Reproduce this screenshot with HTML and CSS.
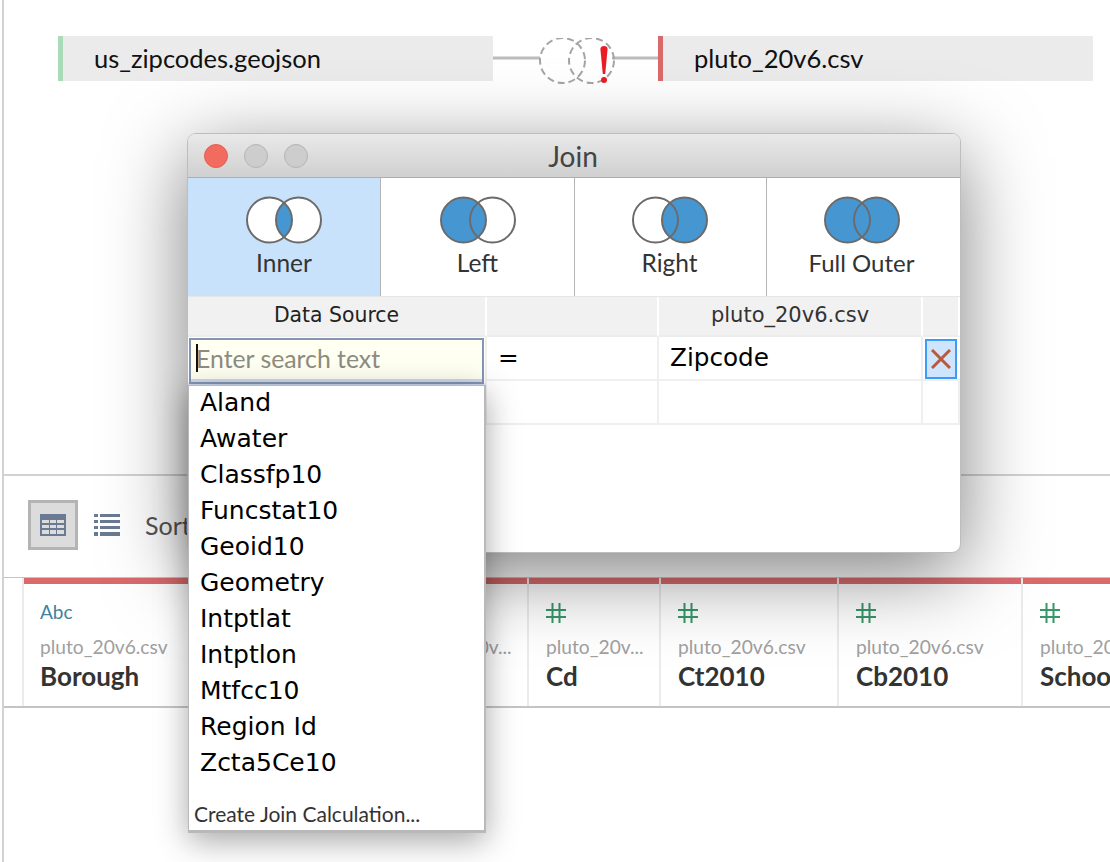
FILE: index.html
```html
<!DOCTYPE html>
<html lang="en">
<head>
<meta charset="utf-8">
<title>Join</title>
<link rel="stylesheet" href="styles.css">
</head>
<body>
<div class="page">
  <div class="joinbar">
    <div class="tile tile-green">us_zipcodes.geojson</div>
    <div class="link">
      <svg width="165" height="48" viewBox="0 0 165 48">
        <path class="link-line" d="M0 20H47M119 20H165"/>
        <circle class="dash" cx="69.500" cy="22.500" r="22.500"/>
        <circle class="dash" cx="98.500" cy="22.500" r="22.500"/>
        <path class="bang" d="M111 8C113 8 114.600 9 114.600 11L112.200 36H109.800L107.400 11C107.400 9 109 8 111 8Z"/>
        <circle class="bang" cx="111" cy="42" r="3"/>
      </svg>
    </div>
    <div class="tile tile-red">pluto_20v6.csv</div>
  </div>
  <div class="canvas"></div>
  <div class="toolbar">
    <div class="tool tool-on">
      <svg width="26" height="22" viewBox="0 0 26 22"><path class="ico" fill-rule="evenodd" d="M0 0H26V22H0ZM2 6V9H9V6ZM10 6V9H16V6ZM17 6V9H24V6ZM2 11V14H9V11ZM10 11V14H16V11ZM17 11V14H24V11ZM2 16V20H9V16ZM10 16V20H16V16ZM17 16V20H24V16Z"/></svg>
    </div>
    <div class="tool tool-list">
      <svg width="26" height="22" viewBox="0 0 26 22"><path class="ico" d="M0 0H4V3H0ZM6 0H26V3H6ZM0 6H4V9H0ZM6 6H26V9H6ZM0 12H4V15H0ZM6 12H26V15H6ZM0 18H4V22H0ZM6 18H26V22H6Z"/></svg>
    </div>
    <span class="sort">Sort</span>
  </div>
  <div class="fields">
    <div class="field w-borough"><span class="abc">Abc</span><span class="src">pluto_20v6.csv</span><span class="name">Borough</span></div>
    <div class="field w-block"></div>
    <div class="field w-lot"><span class="kind"></span><span class="src">pluto_20v...</span></div>
    <div class="field w-cd"><svg class="hash" width="20" height="20" viewBox="0 0 20 20"><path d="M6.500 0V20M13.500 0V20M0 7H20M0 14H20"/></svg><span class="src">pluto_20v...</span><span class="name">Cd</span></div>
    <div class="field w-ct"><svg class="hash" width="20" height="20" viewBox="0 0 20 20"><path d="M6.500 0V20M13.500 0V20M0 7H20M0 14H20"/></svg><span class="src">pluto_20v6.csv</span><span class="name">Ct2010</span></div>
    <div class="field w-cb"><svg class="hash" width="20" height="20" viewBox="0 0 20 20"><path d="M6.500 0V20M13.500 0V20M0 7H20M0 14H20"/></svg><span class="src">pluto_20v6.csv</span><span class="name">Cb2010</span></div>
    <div class="field w-sc"><svg class="hash" width="20" height="20" viewBox="0 0 20 20"><path d="M6.500 0V20M13.500 0V20M0 7H20M0 14H20"/></svg><span class="src">pluto_20v6.csv</span><span class="name">Schooldist</span></div>
  </div>

  <div class="dialog">
    <div class="titlebar">
      <div class="lights"><i class="light light-red"></i><i class="light"></i><i class="light"></i></div>
      <span class="title">Join</span>
    </div>
    <div class="types">
      <div class="type type-on">
        <svg class="venn" width="78" height="48" viewBox="0 0 78 48">
          <circle class="v-w" cx="24.500" cy="24" r="22.500"/><circle class="v-w" cx="53.500" cy="24" r="22.500"/>
          <path class="v-b" d="M39 6.800A22.500 22.500 0 0 1 39 41.200A22.500 22.500 0 0 1 39 6.800Z"/>
          <circle class="v-s" cx="24.500" cy="24" r="22.500"/><circle class="v-s" cx="53.500" cy="24" r="22.500"/>
        </svg>
        <span>Inner</span>
      </div>
      <div class="type">
        <svg class="venn" width="78" height="48" viewBox="0 0 78 48">
          <circle class="v-b" cx="24.500" cy="24" r="22.500"/>
          <circle class="v-s" cx="24.500" cy="24" r="22.500"/><circle class="v-s" cx="53.500" cy="24" r="22.500"/>
        </svg>
        <span>Left</span>
      </div>
      <div class="type type-r">
        <svg class="venn" width="78" height="48" viewBox="0 0 78 48">
          <circle class="v-b" cx="53.500" cy="24" r="22.500"/>
          <circle class="v-s" cx="24.500" cy="24" r="22.500"/><circle class="v-s" cx="53.500" cy="24" r="22.500"/>
        </svg>
        <span>Right</span>
      </div>
      <div class="type type-f">
        <svg class="venn" width="78" height="48" viewBox="0 0 78 48">
          <circle class="v-b" cx="24.500" cy="24" r="22.500"/><circle class="v-b" cx="53.500" cy="24" r="22.500"/>
          <circle class="v-s" cx="24.500" cy="24" r="22.500"/><circle class="v-s" cx="53.500" cy="24" r="22.500"/>
        </svg>
        <span>Full Outer</span>
      </div>
    </div>
    <div class="clause">
      <div class="th th-src">Data Source</div><div class="th"></div><div class="th th-dim">pluto_20v6.csv</div><div class="th"></div>
      <div class="td"></div><div class="td td-eq">=</div><div class="td td-val">Zipcode</div>
      <div class="td td-x">
        <div class="xbtn"><svg width="20" height="20" viewBox="0 0 20 20"><path class="x" d="M1 1L19 19M19 1L1 19"/></svg></div>
      </div>
      <div class="td"></div><div class="td"></div><div class="td"></div><div class="td"></div>
    </div>
  </div>

  <div class="picker">
    <div class="search"><i class="caret"></i><span class="hint">Enter search text</span></div>
    <div class="menu">
      <ul class="options">
        <li>Aland</li><li>Awater</li><li>Classfp10</li><li>Funcstat10</li><li>Geoid10</li><li>Geometry</li><li>Intptlat</li><li>Intptlon</li><li>Mtfcc10</li><li>Region Id</li><li>Zcta5Ce10</li>
      </ul>
      <div class="calc">Create Join Calculation...</div>
    </div>
  </div>
</div>
</body>
</html>
```
FILE: styles.css
```css
* { box-sizing: border-box; }
html, body { margin: 0; padding: 0; background: #fff; }
.page {
  position: relative;
  width: 1110px;
  height: 862px;
  overflow: hidden;
  display: flex;
  flex-direction: column;
  padding-left: 4px;
  background: #fff;
  font-family: "Lato", sans-serif;
  color: #222;
}
.page::before {
  content: "";
  position: absolute;
  left: 2px;
  top: 0;
  bottom: 0;
  width: 2px;
  background: #d2d2d2;
}
.joinbar {
  display: flex;
  height: 45px;
  margin: 36px 0 0 54px;
}
.tile {
  width: 435px;
  background: #ebebeb;
  padding-left: 31px;
  font-size: 25.500px;
  line-height: 45px;
  color: #111;
}
.tile-green { border-left: 5px solid #a9dbb8; }
.tile-red { border-left: 5px solid #d96a6c; }
.link { width: 165px; padding-top: 2px; }
.link svg { display: block; }
.link-line { stroke: #bcbcbc; stroke-width: 3; fill: none; }
.dash { fill: none; stroke: #a5a5a5; stroke-width: 2; stroke-dasharray: 7 4; }
.bang { fill: #ea1c24; }
.canvas { height: 393px; flex: none; }
.toolbar {
  height: 103px;
  flex: none;
  border-top: 2px solid #d2d2d2;
  display: flex;
  align-items: center;
  padding: 0 0 3px 24px;
}
.tool {
  width: 50px;
  height: 50px;
  display: flex;
  align-items: center;
  justify-content: center;
}
.tool-list { margin-left: 16px; width: 26px; }
.tool-on { background: #dcdcdc; border: 3px solid #b4b4b4; }
.ico { fill: #6a7a93; }
.sort { margin-left: 25px; font-size: 25px; color: #555; }
.fields {
  display: flex;
  flex: none;
  height: 131px;
  padding-left: 18px;
  border-top: 1px solid #c4c4c4;
  border-bottom: 2px solid #c4c4c4;
}
.field {
  flex: none;
  display: flex;
  flex-direction: column;
  padding: 6px 0 0 16px;
  border-left: 2px solid #ebebeb;
  background: linear-gradient(#d96a6c, #d96a6c) no-repeat top left / 100% 6px;
  background-origin: padding-box;
  background-clip: padding-box;
  white-space: nowrap;
  overflow: hidden;
}
.w-borough { width: 186px; }
.w-block { width: 188px; }
.w-lot { width: 131px; }
.w-cd { width: 132px; padding-left: 17px; }
.w-ct { width: 178px; padding-left: 17px; }
.w-cb { width: 184px; padding-left: 17px; }
.w-sc { width: 120px; padding-left: 17px; }
.abc { font-size: 19px; line-height: 24px; margin-top: 16px; color: #3e83a0; height: 24px; }
.kind { height: 24px; margin-top: 16px; }
.hash { display: block; margin: 19px 0 1px; fill: none; stroke: #37966a; stroke-width: 2; flex: none; }
.src { font-size: 19.200px; line-height: 24px; margin-top: 11px; color: #a0a0a0; }
.name { font-size: 26px; line-height: 30px; font-weight: 700; color: #333; margin-top: 2px; }

.dialog {
  position: absolute;
  left: 187px;
  top: 133px;
  width: 774px;
  height: 420px;
  background: #fff;
  border: 1px solid #bdbdbd;
  border-radius: 9px;
  box-shadow: 0 20px 80px rgba(0,0,0,.5);
  overflow: hidden;
  font-family: "DejaVu Sans", sans-serif;
}
.titlebar {
  position: relative;
  height: 44px;
  background: linear-gradient(#e9e9e9, #d0d0d0);
  border-bottom: 1px solid #adadad;
  display: flex;
  align-items: center;
  justify-content: center;
}
.lights {
  position: absolute;
  left: 16px;
  top: 10px;
  display: flex;
  gap: 16px;
}
.light {
  width: 24px;
  height: 24px;
  border-radius: 50%;
  background: #cdcdcd;
  border: 1px solid #b4b4b4;
}
.light-red { background: #f16b5f; border-color: #e25f54; }
.title { font-family: "Lato", sans-serif; font-size: 28px; color: #444; margin-left: -2px; }
.types {
  display: grid;
  grid-template-columns: 192px 194px 192px 194px;
  height: 119px;
  border-bottom: 1px solid #e6e6e6;
}
.type {
  display: flex;
  flex-direction: column;
  align-items: center;
  padding-top: 18px;
  font-family: "Lato", sans-serif;
  font-size: 24.500px;
  line-height: 30px;
  color: #333;
  border-left: 1px solid #b4b4b4;
}
.type:first-child { border-left: 0; }
.type-r { padding-right: 2px; }
.type-f { padding-right: 4px; font-size: 24px; }
.type span { margin-top: 4px; }
.type-on { background: #c8e2fc; }
.venn { display: block; }
.v-w { fill: #fff; }
.v-b { fill: #4696d2; }
.v-s { fill: none; stroke: #6b6b6b; stroke-width: 2; }
.clause {
  display: grid;
  grid-template-columns: 299px 172px 264px 37px;
  grid-template-rows: 40px 44px 44px;
}
.th {
  background: #f1f1f1;
  border-right: 2px solid #fff;
  border-bottom: 2px solid #ececec;
  text-align: center;
  font-size: 20.400px;
  line-height: 36px;
  color: #222;
}
.th-dim { color: #333; font-size: 21px; }
.td {
  border-right: 2px solid #efefef;
  border-bottom: 2px solid #efefef;
  font-size: 24.700px;
  line-height: 42px;
  color: #000;
}
.td-eq { padding-left: 11px; }
.td-val { padding-left: 11px; }
.td-x { padding: 2px 0 0 2px; border-right: 0; }
.xbtn {
  width: 32px;
  height: 40px;
  background: #cfe5fd;
  border: 2px solid #3d9bfa;
  display: flex;
  align-items: center;
  justify-content: center;
}
.x { stroke: #b9583a; stroke-width: 3; fill: none; }

.picker {
  position: absolute;
  left: 188px;
  top: 337px;
  width: 298px;
  height: 496px;
  display: flex;
  flex-direction: column;
  font-family: "DejaVu Sans", sans-serif;
}
.search {
  height: 48px;
  flex: none;
  display: flex;
  align-items: center;
  margin-right: 1px;
  padding: 0 0 2px 6px;
  background: #fffff2;
  border: 2px solid #fff;
  outline: 2px solid #8495b3;
  outline-offset: -3px;
  border-bottom: 6px solid #cdd9ee;
  font-family: "Lato", sans-serif;
  font-size: 24.800px;
  color: #8c8c80;
}
.hint { margin-left: -2px; }
.caret { width: 2px; height: 28px; background: #111; flex: none; }
.menu {
  flex: 1;
  display: flex;
  flex-direction: column;
  background: #fff;
  border: 1px solid #b9b9b9;
  border-right-width: 2px;
  border-bottom-width: 3px;
  box-shadow: 0 8px 30px rgba(0,0,0,.35);
}
.options { list-style: none; margin: 0; padding: 0 0 0 11px; flex: 1; }
.options li { height: 36px; font-size: 25px; line-height: 34px; color: #000; }
.calc {
  font-family: "Lato", sans-serif;
  font-size: 21px;
  line-height: 28px;
  padding: 0 0 2px 5px;
  color: #333;
}
```
